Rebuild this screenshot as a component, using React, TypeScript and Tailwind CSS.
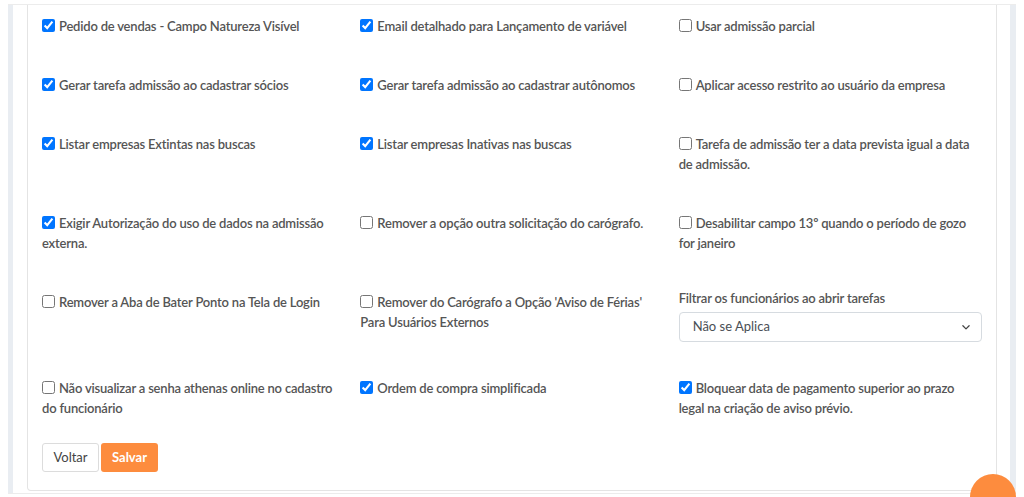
import React from "react";

type Item = { label: string; checked?: boolean; select?: boolean };

const rows: Item[][] = [
  [
    { label: "Pedido de vendas - Campo Natureza Visível", checked: true },
    { label: "Email detalhado para Lançamento de variável", checked: true },
    { label: "Usar admissão parcial" },
  ],
  [
    { label: "Gerar tarefa admissão ao cadastrar sócios", checked: true },
    { label: "Gerar tarefa admissão ao cadastrar autônomos", checked: true },
    { label: "Aplicar acesso restrito ao usuário da empresa" },
  ],
  [
    { label: "Listar empresas Extintas nas buscas", checked: true },
    { label: "Listar empresas Inativas nas buscas", checked: true },
    { label: "Tarefa de admissão ter a data prevista igual a data de admissão." },
  ],
  [
    { label: "Exigir Autorização do uso de dados na admissão externa.", checked: true },
    { label: "Remover a opção outra solicitação do carógrafo." },
    { label: "Desabilitar campo 13º quando o período de gozo for janeiro" },
  ],
  [
    { label: "Remover a Aba de Bater Ponto na Tela de Login" },
    { label: "Remover do Carógrafo a Opção 'Aviso de Férias' Para Usuários Externos" },
    { label: "Filtrar os funcionários ao abrir tarefas", select: true },
  ],
  [
    { label: "Não visualizar a senha athenas online no cadastro do funcionário" },
    { label: "Ordem de compra simplificada", checked: true },
    { label: "Bloquear data de pagamento superior ao prazo legal na criação de aviso prévio.", checked: true },
  ],
];

function Cell({ item }: { item: Item }) {
  if (item.select) {
    return (
      <div className="-mb-[3px]">
        <div className="leading-[20px]">{item.label}</div>
        <div className="mt-[4px] h-[30px] w-full rounded-[4px] border border-[#d6dbe0] flex items-center justify-between pl-[13px] pr-[10px] font-normal tracking-normal text-[#4a4f55]">
          <span>Não se Aplica</span>
          <svg width="10" height="10" viewBox="0 0 16 16" fill="none">
            <path d="M3 6l5 5 5-5" stroke="#444" strokeWidth="2" strokeLinecap="round" strokeLinejoin="round" />
          </svg>
        </div>
      </div>
    );
  }
  return (
    <div className="pt-[4px]">
      <label className="leading-[20px] block">
        <input type="checkbox" defaultChecked={item.checked} className="mr-[4px] align-[-1px] w-[13px] h-[13px]" />
        {item.label}
      </label>
    </div>
  );
}

export default function App() {
  return (
    <div className="relative w-[1024px] h-[497px] overflow-hidden bg-white font-['Lato',sans-serif] text-[13px] tracking-[-0.2px] font-semibold text-[#555]">
      <div className="ml-[8px] mr-[8px] mt-[4px] h-[490px] border-t border-b border-[#ececec] flex">
        <div className="w-[5px] bg-[#e9edf2]" />
        <div className="w-[14px]" />
        <div className="w-[970px] mb-[2px] border-l border-r border-b border-[#e4e4e4] rounded-b-[4px] px-[14px] pt-[7px]">
          <div className="grid grid-cols-3 gap-x-[15px] gap-y-[35px]">
            {rows.flat().map((it, i) => (
              <Cell key={i} item={it} />
            ))}
          </div>
          <div className="mt-[25px] flex gap-[2px]">
            <button className="h-[29px] w-[57px] rounded-[3px] border border-[#dcdcdc] bg-white font-normal tracking-normal text-[#444]">Voltar</button>
            <button className="h-[29px] w-[57px] rounded-[3px] bg-[#fd8c3e] text-white font-bold tracking-normal">Salvar</button>
          </div>
        </div>
        <div className="w-[13px]" />
        <div className="w-[6px] bg-[#e9edf2]" />
      </div>
      <div className="absolute left-[970px] top-[474px] w-[46px] h-[46px] rounded-full bg-[#fd8c3e]" />
    </div>
  );
}
